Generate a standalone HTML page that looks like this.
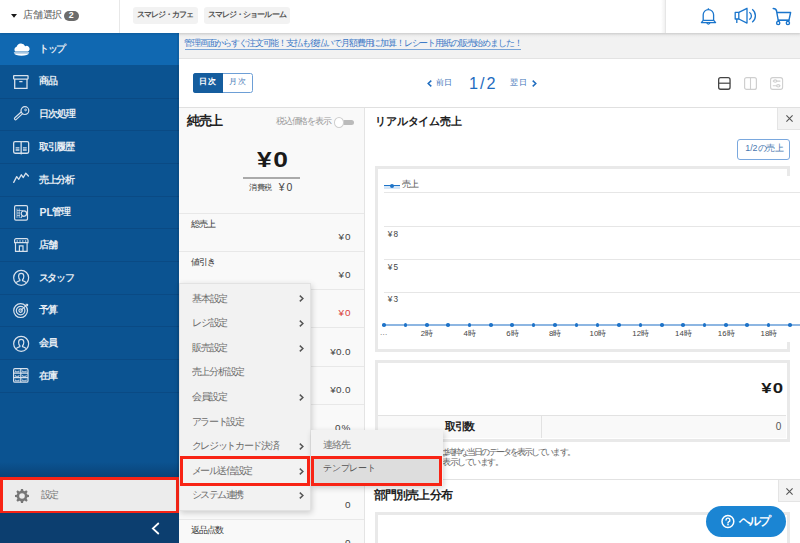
<!DOCTYPE html><html><head><meta charset="utf-8"><style>
*{margin:0;padding:0;box-sizing:border-box}
html,body{width:800px;height:543px;overflow:hidden;background:#fff;font-family:"Liberation Sans",sans-serif;color:#333}
.a{position:absolute}
.t{position:absolute;white-space:nowrap;line-height:1}
.j{position:absolute;white-space:nowrap;line-height:1;text-align:justify;text-align-last:justify;letter-spacing:-0.15em}
svg{position:absolute;overflow:visible}
</style></head><body>
<div class="a" style="left:179px;top:33px;width:621px;height:25.5px;background:#f2f2f2;border-bottom:1px solid #e3e3e3"></div>
<div class="a" style="left:179px;top:33px;width:621px;height:5px;background:linear-gradient(to bottom,rgba(0,0,0,.05),rgba(0,0,0,0))"></div>
<div class="j" style="left:184.12px;top:39.48px;width:337.12px;font-size:9.38px;color:#3a78c6;font-weight:normal">管理画面からすぐ注文可能！支払も後払いで月額費用に加算！レシート用紙の販売始めました！</div>
<div class="a" style="left:185.25px;top:48.6px;width:336px;height:0.8px;background:#7aa5d8"></div>
<div class="a" style="left:179px;top:107px;width:621px;height:1px;background:#e0e0e0"></div>
<div class="a" style="left:192.8px;top:72.8px;width:60px;height:20px;border:1px solid #6d9fd6;border-radius:2.5px;background:#fff"></div>
<div class="a" style="left:192.8px;top:72.8px;width:30px;height:20px;background:#155d9e;border-radius:2.5px 0 0 2.5px"></div>
<div class="j" style="left:199.00px;top:77.30px;width:15.70px;font-size:8.38px;color:#fff;font-weight:bold">日次</div>
<div class="j" style="left:228.80px;top:77.30px;width:15.90px;font-size:8.38px;color:#4a7bb8;font-weight:normal">月次</div>
<svg style="left:426.5px;top:79.5px" width="5" height="7" viewBox="0 0 5 7"><path d="M4.3 .6L1.2 3.5l3.1 2.9" fill="none" stroke="#1e6cbf" stroke-width="1.5"/></svg>
<div class="j" style="left:435.62px;top:78.53px;width:15.68px;font-size:8.12px;color:#3a72b8;font-weight:normal">前日</div>
<div class="t" style="left:469.05px;top:74.71px;font-size:16.20px;color:#1e6cbf;font-weight:normal;letter-spacing:2px">1/2</div>
<div class="j" style="left:510.32px;top:78.53px;width:15.97px;font-size:8.12px;color:#3a72b8;font-weight:normal">翌日</div>
<svg style="left:531.5px;top:79.5px" width="5" height="7" viewBox="0 0 5 7"><path d="M.7 .6l3.1 2.9L.7 6.4" fill="none" stroke="#1e6cbf" stroke-width="1.5"/></svg>
<svg style="left:717.9px;top:76.9px" width="13" height="13" viewBox="0 0 13 13"><rect x="0.65" y="0.65" width="11.4" height="11.6" rx="2" fill="none" stroke="#444" stroke-width="1.3"/><path d="M0.65 6.2h11.4" stroke="#444" stroke-width="1.2"/></svg>
<svg style="left:743.8px;top:76.9px" width="13" height="13" viewBox="0 0 13 13"><rect x="0.6" y="0.6" width="11.8" height="11.8" rx="2" fill="none" stroke="#cfcfcf" stroke-width="1.2"/><path d="M6.5 0.6v11.8" stroke="#cfcfcf" stroke-width="1.1"/></svg>
<svg style="left:770.3px;top:76.9px" width="13" height="13" viewBox="0 0 13 13" fill="none" stroke="#cfcfcf" stroke-width="1.1"><rect x="0.6" y="0.6" width="12" height="11.8" rx="2.2"/><path d="M2.8 4.1h7.6M2.8 8.8h7.6"/><ellipse cx="5.2" cy="4.1" rx="1.6" ry="1.2" fill="#fff"/><ellipse cx="8.2" cy="8.8" rx="1.6" ry="1.2" fill="#fff"/></svg>
<div class="a" style="left:179px;top:107.5px;width:186px;height:436px;background:#f9f9f9;border-right:1px solid #e4e4e4"></div>
<div class="j" style="left:187.35px;top:114.70px;width:33.90px;font-size:12.94px;color:#222;font-weight:bold">純売上</div>
<div class="j" style="left:276.28px;top:117.38px;width:49.72px;font-size:8.50px;color:#999;font-weight:normal">税込価格を表示</div>
<div class="a" style="left:342px;top:119.9px;width:12.1px;height:4.9px;border-radius:2.5px;background:#bbb"></div>
<div class="a" style="left:334.3px;top:117.3px;width:10px;height:10.7px;border-radius:50%;background:#fff;border:1px solid #cfcfcf"></div>
<div class="t" style="left:256.83px;top:149.18px;font-size:21.65px;color:#1a1a1a;font-weight:bold;letter-spacing:1.2px;transform:scaleX(1.22);transform-origin:0 0">¥0</div>
<div class="a" style="left:243.1px;top:177px;width:56.5px;height:1.9px;background:#aaa"></div>
<div class="j" style="left:248.91px;top:184.31px;width:21.99px;font-size:8.25px;color:#444;font-weight:normal">消費税</div>
<div class="t" style="left:278.78px;top:182.79px;font-size:10.47px;color:#444;font-weight:normal;letter-spacing:2px">¥0</div>
<div class="a" style="left:179px;top:212.5px;width:185px;height:1px;background:#e8e8e8"></div>
<div class="j" style="left:191.12px;top:220.02px;width:23.48px;font-size:9.00px;color:#333;font-weight:normal">総売上</div>
<div class="t" style="right:448.60px;top:231.66px;font-size:9.92px;color:#444;font-weight:normal;letter-spacing:1px">¥0</div>
<div class="a" style="left:179px;top:250.8px;width:185px;height:1px;background:#e8e8e8"></div>
<div class="j" style="left:191.12px;top:258.32px;width:23.48px;font-size:9.00px;color:#333;font-weight:normal">値引き</div>
<div class="t" style="right:448.60px;top:269.96px;font-size:9.92px;color:#444;font-weight:normal;letter-spacing:1px">¥0</div>
<div class="a" style="left:179px;top:289.1px;width:185px;height:1px;background:#e8e8e8"></div>
<div class="t" style="right:448.60px;top:308.26px;font-size:9.92px;color:#d9413b;font-weight:normal;letter-spacing:1px">¥0</div>
<div class="a" style="left:179px;top:327.4px;width:185px;height:1px;background:#e8e8e8"></div>
<div class="t" style="right:449.30px;top:346.56px;font-size:9.92px;color:#444;font-weight:normal;letter-spacing:0.3px">¥0.0</div>
<div class="a" style="left:179px;top:365.7px;width:185px;height:1px;background:#e8e8e8"></div>
<div class="t" style="right:449.30px;top:384.86px;font-size:9.92px;color:#444;font-weight:normal;letter-spacing:0.3px">¥0.0</div>
<div class="a" style="left:179px;top:404.0px;width:185px;height:1px;background:#e8e8e8"></div>
<div class="t" style="right:448.60px;top:423.16px;font-size:9.92px;color:#444;font-weight:normal;letter-spacing:1px">0%</div>
<div class="a" style="left:179px;top:442.3px;width:185px;height:1px;background:#e8e8e8"></div>
<div class="a" style="left:179px;top:480.6px;width:185px;height:1px;background:#e8e8e8"></div>
<div class="t" style="right:448.60px;top:499.76px;font-size:9.92px;color:#444;font-weight:normal;letter-spacing:1px">0</div>
<div class="a" style="left:179px;top:518.9px;width:185px;height:1px;background:#e8e8e8"></div>
<div class="j" style="left:191.12px;top:526.42px;width:31.08px;font-size:9.00px;color:#333;font-weight:normal">返品点数</div>
<div class="t" style="right:448.60px;top:538.06px;font-size:9.92px;color:#444;font-weight:normal;letter-spacing:1px">0</div>
<div class="j" style="left:375.13px;top:116.38px;width:85.12px;font-size:11.44px;color:#222;font-weight:bold">リアルタイム売上</div>
<div class="a" style="left:777px;top:107.5px;width:23px;height:22px;background:#f3f3f3;border-left:1px solid #e4e4e4;border-bottom:1px solid #e4e4e4"></div>
<svg style="left:785.5px;top:115px" width="7" height="7" viewBox="0 0 7 7"><path d="M.4 .4l6.2 6.2M6.6 .4L.4 6.6" stroke="#555" stroke-width="1.1"/></svg>
<div class="a" style="left:737.1px;top:139.1px;width:52.5px;height:20.5px;border:1px solid #7aa8de;border-radius:3px;background:#fff"></div>
<div class="j" style="left:745.18px;top:143.53px;width:37.12px;font-size:8.94px;color:#4a78b0;font-weight:normal"><span style="letter-spacing:0">1/2</span>の売上</div>
<div class="a" style="left:375.3px;top:166.2px;width:414.3px;height:185.4px;border:3px solid #e9e9e9;background:#fff"></div>
<div class="a" style="left:378.3px;top:176px;width:421.7px;height:166px;background:#fff"></div>
<div class="a" style="left:384px;top:185.8px;width:15.6px;height:3px;background:#d5e6f7"></div>
<div class="a" style="left:384px;top:184.8px;width:15.6px;height:1.4px;background:#1e74c8"></div>
<div class="a" style="left:389.8px;top:183.5px;width:4px;height:4px;border-radius:50%;background:#1e74c8"></div>
<div class="j" style="left:401.95px;top:180.45px;width:16.05px;font-size:8.75px;color:#555;font-weight:normal">売上</div>
<div class="a" style="left:384px;top:192.1px;width:416px;height:1px;background:#e6e6e6"></div>
<div class="a" style="left:384px;top:225.7px;width:416px;height:1px;background:#e6e6e6"></div>
<div class="a" style="left:384px;top:258.9px;width:416px;height:1px;background:#e6e6e6"></div>
<div class="a" style="left:384px;top:292.0px;width:416px;height:1px;background:#e6e6e6"></div>
<div class="t" style="left:387.67px;top:230.99px;font-size:8.24px;color:#444;font-weight:normal;letter-spacing:1.2px">¥8</div>
<div class="t" style="left:387.67px;top:263.99px;font-size:8.24px;color:#444;font-weight:normal;letter-spacing:1.2px">¥5</div>
<div class="t" style="left:387.67px;top:296.39px;font-size:8.24px;color:#444;font-weight:normal;letter-spacing:1.2px">¥3</div>
<div class="a" style="left:384px;top:324.3px;width:416px;height:1.5px;background:#8db6e2"></div>
<div class="a" style="left:382.20px;top:323.2px;width:3.6px;height:3.6px;border-radius:50%;background:#1e73c8"></div>
<div class="a" style="left:403.57px;top:323.2px;width:3.6px;height:3.6px;border-radius:50%;background:#1e73c8"></div>
<div class="a" style="left:424.94px;top:323.2px;width:3.6px;height:3.6px;border-radius:50%;background:#1e73c8"></div>
<div class="a" style="left:446.31px;top:323.2px;width:3.6px;height:3.6px;border-radius:50%;background:#1e73c8"></div>
<div class="a" style="left:467.68px;top:323.2px;width:3.6px;height:3.6px;border-radius:50%;background:#1e73c8"></div>
<div class="a" style="left:489.05px;top:323.2px;width:3.6px;height:3.6px;border-radius:50%;background:#1e73c8"></div>
<div class="a" style="left:510.42px;top:323.2px;width:3.6px;height:3.6px;border-radius:50%;background:#1e73c8"></div>
<div class="a" style="left:531.79px;top:323.2px;width:3.6px;height:3.6px;border-radius:50%;background:#1e73c8"></div>
<div class="a" style="left:553.16px;top:323.2px;width:3.6px;height:3.6px;border-radius:50%;background:#1e73c8"></div>
<div class="a" style="left:574.53px;top:323.2px;width:3.6px;height:3.6px;border-radius:50%;background:#1e73c8"></div>
<div class="a" style="left:595.90px;top:323.2px;width:3.6px;height:3.6px;border-radius:50%;background:#1e73c8"></div>
<div class="a" style="left:617.27px;top:323.2px;width:3.6px;height:3.6px;border-radius:50%;background:#1e73c8"></div>
<div class="a" style="left:638.64px;top:323.2px;width:3.6px;height:3.6px;border-radius:50%;background:#1e73c8"></div>
<div class="a" style="left:660.01px;top:323.2px;width:3.6px;height:3.6px;border-radius:50%;background:#1e73c8"></div>
<div class="a" style="left:681.38px;top:323.2px;width:3.6px;height:3.6px;border-radius:50%;background:#1e73c8"></div>
<div class="a" style="left:702.75px;top:323.2px;width:3.6px;height:3.6px;border-radius:50%;background:#1e73c8"></div>
<div class="a" style="left:724.12px;top:323.2px;width:3.6px;height:3.6px;border-radius:50%;background:#1e73c8"></div>
<div class="a" style="left:745.49px;top:323.2px;width:3.6px;height:3.6px;border-radius:50%;background:#1e73c8"></div>
<div class="a" style="left:766.86px;top:323.2px;width:3.6px;height:3.6px;border-radius:50%;background:#1e73c8"></div>
<div class="a" style="left:788.23px;top:323.2px;width:3.6px;height:3.6px;border-radius:50%;background:#1e73c8"></div>
<div class="t" style="left:380px;top:328.5px;font-size:8px;color:#666;letter-spacing:0.3px">...</div>
<div class="t" style="left:406.74px;top:330px;width:40px;text-align:center;font-size:7.8px;color:#444">2<span style="letter-spacing:-0.5px">時</span></div>
<div class="t" style="left:449.48px;top:330px;width:40px;text-align:center;font-size:7.8px;color:#444">4<span style="letter-spacing:-0.5px">時</span></div>
<div class="t" style="left:492.22px;top:330px;width:40px;text-align:center;font-size:7.8px;color:#444">6<span style="letter-spacing:-0.5px">時</span></div>
<div class="t" style="left:534.96px;top:330px;width:40px;text-align:center;font-size:7.8px;color:#444">8<span style="letter-spacing:-0.5px">時</span></div>
<div class="t" style="left:577.70px;top:330px;width:40px;text-align:center;font-size:7.8px;color:#444">10<span style="letter-spacing:-0.5px">時</span></div>
<div class="t" style="left:620.44px;top:330px;width:40px;text-align:center;font-size:7.8px;color:#444">12<span style="letter-spacing:-0.5px">時</span></div>
<div class="t" style="left:663.18px;top:330px;width:40px;text-align:center;font-size:7.8px;color:#444">14<span style="letter-spacing:-0.5px">時</span></div>
<div class="t" style="left:705.92px;top:330px;width:40px;text-align:center;font-size:7.8px;color:#444">16<span style="letter-spacing:-0.5px">時</span></div>
<div class="t" style="left:748.66px;top:330px;width:40px;text-align:center;font-size:7.8px;color:#444">18<span style="letter-spacing:-0.5px">時</span></div>
<div class="a" style="left:375.3px;top:359.5px;width:414.3px;height:82.3px;border:3px solid #e9e9e9;background:#fff"></div>
<div class="a" style="left:378.3px;top:414.7px;width:408px;height:23.7px;background:#f9f9f9;border-top:1px solid #e2e2e2"></div>
<div class="a" style="left:541.2px;top:414.7px;width:1px;height:23.7px;background:#e2e2e2"></div>
<div class="t" style="right:15.88px;top:379.51px;font-size:15.50px;color:#1a1a1a;font-weight:bold;letter-spacing:1px;transform:scaleX(1.2);transform-origin:100% 0">¥0</div>
<div class="j" style="left:444.69px;top:421.20px;width:29.00px;font-size:10.87px;color:#222;font-weight:bold">取引数</div>
<div class="t" style="right:18.60px;top:422.14px;font-size:10.06px;color:#555;font-weight:normal;letter-spacing:0px">0</div>
<div class="j" style="left:374.95px;top:448.15px;width:198.05px;font-size:8.75px;color:#666;font-weight:normal;letter-spacing:-0.3em">※リアルタイム売上は純粋な当日のデータを表示しています。</div>
<div class="j" style="left:374.95px;top:457.55px;width:126.05px;font-size:8.75px;color:#666;font-weight:normal;letter-spacing:-0.3em">※返品等は純売上を表示しています。</div>
<div class="a" style="left:365px;top:478.5px;width:435px;height:1px;background:#e2e2e2"></div>
<div class="j" style="left:373.84px;top:488.69px;width:77.16px;font-size:11.75px;color:#222;font-weight:bold">部門別売上分布</div>
<div class="a" style="left:777.5px;top:479.5px;width:22.5px;height:22.3px;background:#f3f3f3;border-left:1px solid #e4e4e4;border-bottom:1px solid #e4e4e4"></div>
<svg style="left:785.5px;top:487.5px" width="7" height="7" viewBox="0 0 7 7"><path d="M.4 .4l6.2 6.2M6.6 .4L.4 6.6" stroke="#555" stroke-width="1.1"/></svg>
<div class="a" style="left:375.3px;top:512px;width:414.3px;height:60px;border:3px solid #e9e9e9;background:#fff"></div>
<div class="a" style="left:706.2px;top:506.3px;width:80px;height:30.7px;border-radius:15.4px;background:#1b85d3;z-index:20"></div>
<svg style="left:720.8px;top:514.8px;z-index:21" width="14" height="13" viewBox="0 0 14 13"><circle cx="6.9" cy="6.5" r="5.9" fill="none" stroke="#fff" stroke-width="1.5"/><path d="M5 5.1a1.95 1.95 0 1 1 2.6 1.85c-.45.2-.6.45-.6 1" fill="none" stroke="#fff" stroke-width="1.4" stroke-linecap="round"/><circle cx="7" cy="9.6" r=".85" fill="#fff"/></svg>
<div class="j" style="left:738.61px;top:515.11px;width:31.10px;font-size:11.62px;color:#fff;font-weight:bold;z-index:21">ヘルプ</div>
<div class="a" style="left:0;top:0;width:800px;height:33px;background:#fff;box-shadow:0 1px 2px rgba(0,0,0,.12);z-index:5">
<svg style="left:10.5px;top:14.2px" width="6" height="4" viewBox="0 0 6 4"><path d="M0 0h6L3 3.8z" fill="#1a1a1a"/></svg>
<div class="j" style="left:23.33px;top:10.03px;width:37.67px;font-size:9.75px;color:#555;font-weight:normal">店舗選択</div>
<div class="a" style="left:64.2px;top:10.5px;width:15px;height:10.7px;border-radius:5.4px;background:#6b6b6b"></div>
<div class="t" style="left:68.85px;top:11.41px;font-size:8.80px;color:#fff;font-weight:bold;letter-spacing:0px">2</div>
<div class="a" style="left:119px;top:0;width:1px;height:33px;background:#e8e8e8"></div>
<div class="a" style="left:133.1px;top:6.9px;width:65.4px;height:17.5px;background:#f2f2f2;border-radius:3px"></div>
<div class="j" style="left:136.76px;top:10.91px;width:55.74px;font-size:8.25px;color:#555;font-weight:bold">スマレジ・カフェ</div>
<div class="a" style="left:203.75px;top:6.9px;width:86.3px;height:17.5px;background:#f2f2f2;border-radius:3px"></div>
<div class="j" style="left:207.51px;top:10.91px;width:77.99px;font-size:8.25px;color:#555;font-weight:bold">スマレジ・ショールーム</div>
<div class="a" style="left:661px;top:0;width:4px;height:33px;background:linear-gradient(to right,rgba(0,0,0,0),rgba(0,0,0,.06))"></div>
<div class="a" style="left:665px;top:0;width:1px;height:33px;background:#e6e6e6"></div>
<svg style="left:700px;top:7px" width="17" height="19" viewBox="0 0 17 19" fill="none" stroke="#1a75cc" stroke-width="1.3" stroke-linejoin="round"><path d="M8.4 1.3v1.4"/><path d="M3.2 13.3V7.8a5.2 5.2 0 0 1 10.4 0v5.5l2 2.3H1.4z"/><path d="M3.2 13.4h10.4"/><path d="M6.9 15.6a1.5 1.5 0 0 0 3 0"/></svg>
<svg style="left:733.5px;top:7px" width="23" height="17" viewBox="0 0 23 17" fill="none" stroke="#1a75cc" stroke-width="1.3" stroke-linejoin="round"><path d="M1.2 5.3h3.6L13 1.3v14.8L4.8 12H1.2z"/><path d="M4.8 5.3V12"/><path d="M2.8 12v4"/><path d="M15.3 5.2a4.3 4.3 0 0 1 0 7.4M18.2 2.3a8.2 8.2 0 0 1 0 13"/></svg>
<svg style="left:772px;top:7px" width="20" height="19" viewBox="0 0 20 19" fill="none" stroke="#1a75cc" stroke-width="1.4" stroke-linejoin="round" stroke-linecap="round"><path d="M1.2 1.5c1.8 0 3 .3 3.4 2.5"/><path d="M4.6 4.3l1.6 8.8H17L18.6 5.5H4.8"/><path d="M6.2 13.4h10.8"/><circle cx="6.2" cy="16" r="1.6"/><circle cx="15.9" cy="16" r="1.6"/></svg>
</div>
<div class="a" style="left:0;top:33px;width:179px;height:510px;background:#0b5391;z-index:4">
<div class="a" style="left:0;top:0;width:179px;height:31.5px;background:#1068b1"></div>
<div class="a" style="left:0;top:0.00px;width:179px;height:32.7px">
<svg style="left:12.9px;top:9.9px" width="17" height="13" viewBox="0 0 17 13"><path d="M2.2 8.6A2.9 2.9 0 0 1 3.6 3.8 4.6 4.6 0 0 1 12.2 3.2 2.9 2.9 0 0 1 14.8 8.6z" fill="#fff"/><path d="M1.2 10.2h14.6a7.3 2.6 0 0 1-14.6 0z" fill="#fff"/><path d="M.9 9.4h15.2" stroke="#fff" stroke-width=".7"/></svg>
</div>
<div class="j" style="left:38.86px;top:10.71px;width:26.04px;font-size:9.50px;color:#e6ecf3;font-weight:bold">トップ</div>
<div class="a" style="left:0;top:32.70px;width:179px;height:32.7px">
<svg style="left:12.9px;top:8.9px" width="16" height="14" viewBox="0 0 16 14" fill="none" stroke="#d8e1ec" stroke-width="1.3"><rect x="0.65" y="0.65" width="14.4" height="3.4" rx=".5"/><path d="M1.7 4.1v9.2h12.3V4.1"/><path d="M6.3 6.6h3.2"/></svg>
</div>
<div class="j" style="left:38.86px;top:43.41px;width:17.84px;font-size:9.50px;color:#e6ecf3;font-weight:bold">商品</div>
<div class="a" style="left:0;top:64.50px;width:179px;height:1px;background:#0a4a84"></div>
<div class="a" style="left:0;top:65.40px;width:179px;height:32.7px">
<svg style="left:13.5px;top:7.4px" width="16" height="14" viewBox="0 0 16 14" fill="none"><path d="M8.2 6.6L1.6 12.6" stroke="#d8e1ec" stroke-width="3.4" stroke-linecap="round"/><path d="M8.2 6.6L1.6 12.6" stroke="#0b5391" stroke-width="1.1" stroke-linecap="round"/><circle cx="10.9" cy="4.6" r="3.9" fill="#0b5391" stroke="#d8e1ec" stroke-width="1.2"/><circle cx="11.6" cy="3.9" r="0.9" stroke="#d8e1ec" stroke-width=".9"/></svg>
</div>
<div class="j" style="left:38.86px;top:76.11px;width:35.34px;font-size:9.50px;color:#e6ecf3;font-weight:bold">日次処理</div>
<div class="a" style="left:0;top:97.20px;width:179px;height:1px;background:#0a4a84"></div>
<div class="a" style="left:0;top:98.10px;width:179px;height:32.7px">
<svg style="left:12.7px;top:10px" width="17" height="14" viewBox="0 0 17 14" fill="none" stroke="#d8e1ec" stroke-width="1.3"><rect x="0.65" y="0.65" width="15" height="11.6" rx="1.4"/><path d="M8.15 0.65v12.4"/><path d="M2.6 6.9h3.8M2.6 9h3.8M9.9 6.9h3.8M9.9 9h3.8"/><path d="M7.2 12.3l1 1 1-1" stroke-width="1"/></svg>
</div>
<div class="j" style="left:38.86px;top:108.81px;width:34.64px;font-size:9.50px;color:#e6ecf3;font-weight:bold">取引履歴</div>
<div class="a" style="left:0;top:129.90px;width:179px;height:1px;background:#0a4a84"></div>
<div class="a" style="left:0;top:130.80px;width:179px;height:32.7px">
<svg style="left:13.3px;top:173.8px;top:7.8px" width="17" height="12" viewBox="0 0 17 12" fill="none" stroke="#d8e1ec" stroke-width="1.3" stroke-linejoin="round" stroke-linecap="round"><path d="M.7 10.4L3.7 4.6 5.8 7.3 8.3 2.8 10.3 5.5 12.8 1.2 15.4 4"/></svg>
</div>
<div class="j" style="left:38.86px;top:141.51px;width:34.64px;font-size:9.50px;color:#e6ecf3;font-weight:bold">売上分析</div>
<div class="a" style="left:0;top:162.60px;width:179px;height:1px;background:#0a4a84"></div>
<div class="a" style="left:0;top:163.50px;width:179px;height:32.7px">
<svg style="left:14.2px;top:8.6px" width="14" height="16" viewBox="0 0 14 16" fill="none" stroke="#d8e1ec" stroke-width="1.2"><rect x="0.6" y="0.6" width="12.9" height="14.5" rx="1.3"/><path d="M3 3.5v9.5M5.2 3.5v9.5M3 5.5h6M3 8h3M3 10.5h3" stroke-width=".7"/><circle cx="9.9" cy="8.6" r="2.7" fill="#0b5391"/><path d="M8.2 11L6.8 13" /></svg>
</div>
<div class="t" style="left:39.6px;top:173.95px;font-size:10.5px;font-weight:bold;color:#e6ecf3">PL</div>
<div class="j" style="left:52.06px;top:174.21px;width:15.54px;font-size:9.50px;color:#e6ecf3;font-weight:bold">管理</div>
<div class="a" style="left:0;top:195.30px;width:179px;height:1px;background:#0a4a84"></div>
<div class="a" style="left:0;top:196.20px;width:179px;height:32.7px">
<svg style="left:13.6px;top:9.3px" width="15" height="14" viewBox="0 0 15 14" fill="none" stroke="#d8e1ec" stroke-width="1.2"><path d="M.6 4.6V2.2A1.6 1.6 0 0 1 2.2 .6h10.2a1.6 1.6 0 0 1 1.6 1.6v2.4z"/><circle cx="3.2" cy="3.1" r=".75" fill="#d8e1ec" stroke="none"/><circle cx="6" cy="3.1" r=".75" fill="#d8e1ec" stroke="none"/><circle cx="8.8" cy="3.1" r=".75" fill="#d8e1ec" stroke="none"/><circle cx="11.6" cy="3.1" r=".75" fill="#d8e1ec" stroke="none"/><path d="M1.5 4.6v8.7h11.6V4.6"/><path d="M5.4 13.3V7.9h3.6v5.4"/></svg>
</div>
<div class="j" style="left:38.86px;top:206.91px;width:17.74px;font-size:9.50px;color:#e6ecf3;font-weight:bold">店舗</div>
<div class="a" style="left:0;top:228.00px;width:179px;height:1px;background:#0a4a84"></div>
<div class="a" style="left:0;top:228.90px;width:179px;height:32.7px">
<svg style="left:12.7px;top:8.4px" width="17" height="17" viewBox="0 0 17 17" fill="none" stroke="#d8e1ec" stroke-width="1.2"><circle cx="8.15" cy="7.85" r="7.5"/><path d="M5.6 6.3a2.6 2.9 0 0 1 5.2 0c0 1.8-.8 3.1-1.3 3.5v.8c1.6.4 3 1.2 3.8 2.1M5.6 6.3c0 1.8.8 3.1 1.3 3.5v.8c-1.6.4-3 1.2-3.8 2.1"/></svg>
</div>
<div class="j" style="left:38.86px;top:239.61px;width:33.94px;font-size:9.50px;color:#e6ecf3;font-weight:bold">スタッフ</div>
<div class="a" style="left:0;top:260.70px;width:179px;height:1px;background:#0a4a84"></div>
<div class="a" style="left:0;top:261.60px;width:179px;height:32.7px">
<svg style="left:12.9px;top:8.5px" width="17" height="15" viewBox="0 0 17 15" fill="none" stroke="#d8e1ec" stroke-width="1.2"><circle cx="7.6" cy="7.6" r="6.9"/><circle cx="7.6" cy="7.6" r="4.3"/><circle cx="7.6" cy="7.6" r="1.7"/><path d="M7.6 7.6l7-6.4M12.6 1.3l2 .1-.1 1.8" stroke-width="1.1"/></svg>
</div>
<div class="j" style="left:38.86px;top:272.31px;width:17.74px;font-size:9.50px;color:#e6ecf3;font-weight:bold">予算</div>
<div class="a" style="left:0;top:293.40px;width:179px;height:1px;background:#0a4a84"></div>
<div class="a" style="left:0;top:294.30px;width:179px;height:32.7px">
<svg style="left:12.7px;top:8.4px" width="17" height="17" viewBox="0 0 17 17" fill="none" stroke="#d8e1ec" stroke-width="1.2"><circle cx="8.15" cy="7.85" r="7.5"/><path d="M5.6 6.3a2.6 2.9 0 0 1 5.2 0c0 1.8-.8 3.1-1.3 3.5v.8c1.6.4 3 1.2 3.8 2.1M5.6 6.3c0 1.8.8 3.1 1.3 3.5v.8c-1.6.4-3 1.2-3.8 2.1"/></svg>
</div>
<div class="j" style="left:38.86px;top:305.01px;width:17.64px;font-size:9.50px;color:#e6ecf3;font-weight:bold">会員</div>
<div class="a" style="left:0;top:326.10px;width:179px;height:1px;background:#0a4a84"></div>
<div class="a" style="left:0;top:327.00px;width:179px;height:32.7px">
<svg style="left:13.2px;top:8.3px" width="16" height="15" viewBox="0 0 16 15" fill="none" stroke="#d8e1ec" stroke-width="1.2"><rect x="0.6" y="0.6" width="14.4" height="13.6" rx="1.3"/><path d="M7.8 0.6v13.6M0.6 5.1h14.4M0.6 9.6h14.4"/><path d="M2.4 2.6v1.2h3.6V2.6M9.6 2.6v1.2h3.6V2.6M2.4 7.1v1.2h3.6V7.1M9.6 7.1v1.2h3.6V7.1M2.4 11.6v1.2h3.6v-1.2M9.6 11.6v1.2h3.6v-1.2" stroke-width=".9"/></svg>
</div>
<div class="j" style="left:38.86px;top:337.71px;width:17.64px;font-size:9.50px;color:#e6ecf3;font-weight:bold">在庫</div>
<div class="a" style="left:0;top:358.80px;width:179px;height:1px;background:#0a4a84"></div>
<div class="a" style="left:177px;top:0;width:2px;height:510px;background:rgba(0,0,0,.07)"></div>
<div class="a" style="left:0;top:429px;width:179px;height:15px;background:linear-gradient(to bottom,rgba(5,30,60,0),rgba(5,30,60,.3))"></div>
<div class="a" style="left:0;top:444px;width:179.3px;height:36.5px;border:3px solid #f82415;background:#ececec"></div>
<svg style="left:14.5px;top:455.7px" width="14" height="14" viewBox="0 0 14 14"><path fill="#777" d="M6 0h2l.35 1.8 1.35.55 1.55-1.05 1.4 1.4-1.05 1.55.55 1.35L14 6v2l-1.8.35-.55 1.35 1.05 1.55-1.4 1.4-1.55-1.05-1.35.55L8 14H6l-.35-1.8-1.35-.55-1.55 1.05-1.4-1.4 1.05-1.55L1.85 8.35 0 8V6l1.8-.35.55-1.35L1.3 2.75l1.4-1.4 1.55 1.05 1.35-.55z"/><circle cx="7" cy="7" r="2.8" fill="#ececec"/></svg>
<div class="j" style="left:40.83px;top:457.43px;width:17.17px;font-size:9.75px;color:#777;font-weight:normal">設定</div>
<div class="a" style="left:0;top:480px;width:179px;height:30px;background:#0c3e6f"></div>
<svg style="left:150.5px;top:488.5px" width="9" height="13" viewBox="0 0 9 13"><path d="M7.8 1L1.8 6.5l6 5.5" fill="none" stroke="#fff" stroke-width="1.7"/></svg>
</div>
<div class="a" style="left:179.3px;top:283.3px;width:132.2px;height:227.5px;background:#f2f2f2;border:1px solid #e2e2e2;box-shadow:1px 2px 6px rgba(0,0,0,.18);z-index:10"></div>
<div class="j" style="left:191.80px;top:293.50px;width:35.10px;font-size:10.00px;color:#6b6b6b;font-weight:normal;z-index:11">基本設定</div>
<svg style="left:299px;top:295.30px;z-index:11" width="5" height="7" viewBox="0 0 5 7"><path d="M.8 .6L3.9 3.5 .8 6.4" fill="none" stroke="#555" stroke-width="1.45"/></svg>
<div class="j" style="left:191.80px;top:318.10px;width:35.10px;font-size:10.00px;color:#6b6b6b;font-weight:normal;z-index:11">レジ設定</div>
<svg style="left:299px;top:319.90px;z-index:11" width="5" height="7" viewBox="0 0 5 7"><path d="M.8 .6L3.9 3.5 .8 6.4" fill="none" stroke="#555" stroke-width="1.45"/></svg>
<div class="j" style="left:191.80px;top:342.70px;width:35.10px;font-size:10.00px;color:#6b6b6b;font-weight:normal;z-index:11">販売設定</div>
<svg style="left:299px;top:344.50px;z-index:11" width="5" height="7" viewBox="0 0 5 7"><path d="M.8 .6L3.9 3.5 .8 6.4" fill="none" stroke="#555" stroke-width="1.45"/></svg>
<div class="j" style="left:191.80px;top:367.30px;width:52.00px;font-size:10.00px;color:#6b6b6b;font-weight:normal;z-index:11">売上分析設定</div>
<div class="j" style="left:191.80px;top:391.90px;width:34.90px;font-size:10.00px;color:#6b6b6b;font-weight:normal;z-index:11">会員設定</div>
<svg style="left:299px;top:393.70px;z-index:11" width="5" height="7" viewBox="0 0 5 7"><path d="M.8 .6L3.9 3.5 .8 6.4" fill="none" stroke="#555" stroke-width="1.45"/></svg>
<div class="j" style="left:191.80px;top:416.50px;width:51.70px;font-size:10.00px;color:#6b6b6b;font-weight:normal;z-index:11">アラート設定</div>
<div class="j" style="left:191.80px;top:441.10px;width:86.50px;font-size:10.00px;color:#6b6b6b;font-weight:normal;z-index:11">クレジットカード決済</div>
<svg style="left:299px;top:442.90px;z-index:11" width="5" height="7" viewBox="0 0 5 7"><path d="M.8 .6L3.9 3.5 .8 6.4" fill="none" stroke="#555" stroke-width="1.45"/></svg>
<div class="j" style="left:191.80px;top:465.70px;width:59.90px;font-size:10.00px;color:#6b6b6b;font-weight:normal;z-index:11">メール送信設定</div>
<svg style="left:299px;top:467.50px;z-index:11" width="5" height="7" viewBox="0 0 5 7"><path d="M.8 .6L3.9 3.5 .8 6.4" fill="none" stroke="#555" stroke-width="1.45"/></svg>
<div class="j" style="left:191.80px;top:490.30px;width:50.90px;font-size:10.00px;color:#6b6b6b;font-weight:normal;z-index:11">システム連携</div>
<svg style="left:299px;top:492.10px;z-index:11" width="5" height="7" viewBox="0 0 5 7"><path d="M.8 .6L3.9 3.5 .8 6.4" fill="none" stroke="#555" stroke-width="1.45"/></svg>
<div class="a" style="left:179.5px;top:456px;width:130.4px;height:29.8px;border:3px solid #f82415;z-index:12"></div>
<div class="a" style="left:311px;top:430px;width:132px;height:56px;background:#f2f2f2;box-shadow:1px 2px 6px rgba(0,0,0,.18);z-index:11"></div>
<div class="a" style="left:311px;top:456px;width:131.2px;height:29.8px;border:3px solid #f82415;background:#dddddd;z-index:12"></div>
<div class="j" style="left:322.83px;top:440.03px;width:27.17px;font-size:9.75px;color:#777;font-weight:normal;z-index:12">連絡先</div>
<div class="j" style="left:323.38px;top:464.38px;width:51.12px;font-size:9.38px;color:#555;font-weight:normal;z-index:13">テンプレート</div>
</body></html>
